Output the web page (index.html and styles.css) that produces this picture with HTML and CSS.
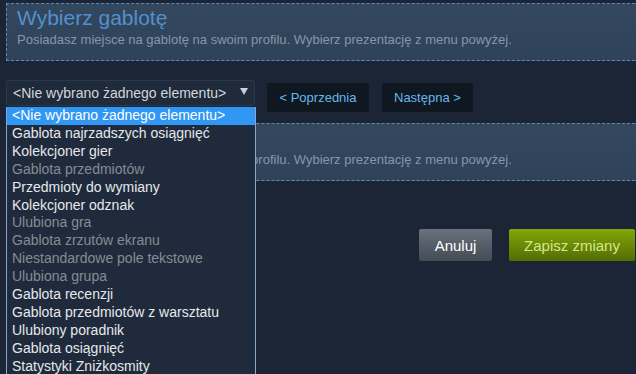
FILE: index.html
```html
<!DOCTYPE html>
<html lang="pl">
  <head>
    <meta charset="utf-8" />
    <title>Wybierz gablotę</title>
    <link rel="stylesheet" href="styles.css">
  </head>
  <body>
    <div class="page">
      <div class="showcase">
        <h2 class="showcase-title">Wybierz gablotę</h2>
        <p class="showcase-desc">Posiadasz miejsce na gablotę na swoim profilu. Wybierz prezentację z menu powyżej.</p>
      </div>

      <div class="controls">
        <div class="select-wrap">
          <div class="select">
            <span>&lt;Nie wybrano żadnego elementu&gt;</span>
            <span class="arrow"></span>
          </div>
          <ul class="options">
            <li class="selected">&lt;Nie wybrano żadnego elementu&gt;</li>
            <li>Gablota najrzadszych osiągnięć</li>
            <li>Kolekcjoner gier</li>
            <li class="disabled">Gablota przedmiotów</li>
            <li>Przedmioty do wymiany</li>
            <li>Kolekcjoner odznak</li>
            <li class="disabled">Ulubiona gra</li>
            <li class="disabled">Gablota zrzutów ekranu</li>
            <li class="disabled">Niestandardowe pole tekstowe</li>
            <li class="disabled">Ulubiona grupa</li>
            <li>Gablota recenzji</li>
            <li>Gablota przedmiotów z warsztatu</li>
            <li>Ulubiony poradnik</li>
            <li>Gablota osiągnięć</li>
            <li>Statystyki Zniżkosmity</li>
          </ul>
        </div>
        <button type="button" class="nav-btn prev">&lt; Poprzednia</button>
        <button type="button" class="nav-btn">Następna &gt;</button>
      </div>

      <div class="showcase">
        <h2 class="showcase-title">Wybierz gablotę</h2>
        <p class="showcase-desc">Posiadasz miejsce na gablotę na swoim profilu. Wybierz prezentację z menu powyżej.</p>
      </div>

      <div class="actions">
        <button type="button" class="btn cancel">Anuluj</button>
        <button type="button" class="btn save">Zapisz zmiany</button>
      </div>
    </div>
  </body>
</html>
```

FILE: styles.css
```css
body {
  margin: 0;
  background-color: #1b2535;
  font-family: "Liberation Sans", Arial, sans-serif;
}
.page {
  position: relative;
  width: 636px;
  height: 374px;
  padding: 3px 1px 0 6px;
  box-sizing: border-box;
  overflow: hidden;
}
.showcase {
  height: 58px;
  margin-right: -20px;
  padding: 2px 10px 0 10px;
  border: 1px dashed #5d89b3;
  background: linear-gradient(to bottom, #33475f, #2e425a);
  box-sizing: border-box;
}
.showcase-title {
  margin: 0;
  font-size: 21px;
  font-weight: normal;
  line-height: 24px;
  color: #5391cb;
}
.showcase-desc {
  margin: 2px 0 0 0;
  font-size: 13px;
  line-height: 16px;
  color: #8796a7;
}

.controls {
  display: flex;
  align-items: flex-start;
  margin: 19px 0 11px 0;
}
.select-wrap {
  position: relative;
  width: 249px;
  margin-right: 12px;
}
.select {
  display: flex;
  justify-content: space-between;
  align-items: center;
  height: 26px;
  padding: 0 6px;
  box-sizing: border-box;
  border: 1px solid #2a384b;
  border-radius: 3px;
  background-color: #1f2a3a;
  font-size: 14px;
  color: #d3d6da;
}
.arrow {
  width: 0;
  height: 0;
  border-left: 4px solid transparent;
  border-right: 4px solid transparent;
  border-top: 7px solid #c6ced8;
  margin-bottom: 4px;
}
.options {
  position: absolute;
  top: 27px;
  left: 0;
  z-index: 10;
  width: 250px;
  margin: 0;
  padding: 0 0 20px 0;
  list-style: none;
  box-sizing: border-box;
  border-left: 1px solid #8aa5cb;
  border-right: 1px solid #8aa5cb;
  background-color: #1f2b3c;
}
.options li {
  padding-left: 5px;
  font-size: 14px;
  line-height: 17.9px;
  color: #e6e8ea;
  white-space: nowrap;
}
.options li.selected {
  background-color: #3197f4;
  color: #ffffff;
}
.options li.disabled {
  color: #858b93;
}

.nav-btn {
  height: 29px;
  margin-top: 3px;
  margin-right: 13px;
  padding: 0 12px;
  border: none;
  border-radius: 2px;
  background-color: #0f1721;
  font-family: "Liberation Sans", Arial, sans-serif;
  font-size: 13px;
  color: #66b8ec;
}
.nav-btn.prev {
  width: 102px;
}

.actions {
  display: flex;
  justify-content: flex-end;
  gap: 17px;
  margin-top: 48px;
}
.btn {
  height: 32px;
  padding: 0 15px;
  border: none;
  border-radius: 2px;
  font-family: "Liberation Sans", Arial, sans-serif;
  font-size: 15px;
}
.btn.cancel {
  width: 73px;
  background: linear-gradient(to bottom, #68717c, #434b55);
  color: #ffffff;
}
.btn.save {
  width: 126px;
  background: linear-gradient(to bottom, #83a60a, #546c05);
  color: #d3e987;
}
```
